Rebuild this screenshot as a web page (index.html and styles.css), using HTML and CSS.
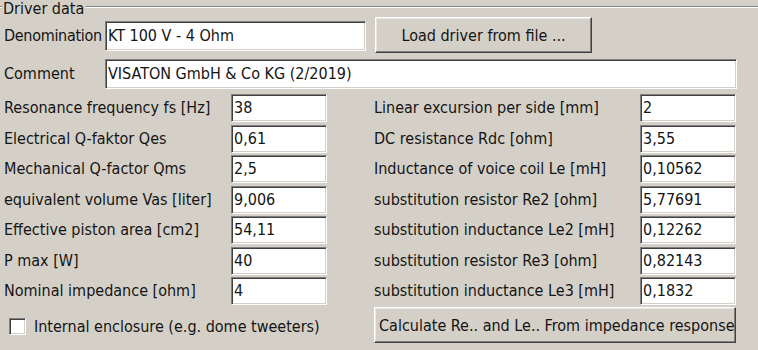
FILE: index.html
```html
<!DOCTYPE html>
<html>
<head>
<meta charset="utf-8">
<link rel="stylesheet" href="styles.css">
</head>
<body>
<div class="panel">
  <div class="legend-row">
    <span class="legend-tick"></span>
    <span class="legend">Driver data</span>
    <span class="legend-line"></span>
  </div>
  <div class="row-denom">
    <span class="lbl lbl-top lbl-denom">Denomination</span>
    <div class="field field-denom">KT 100 V - 4 Ohm</div>
    <div class="btn btn-load">Load driver from file ...</div>
  </div>
  <div class="row-comment">
    <span class="lbl lbl-top">Comment</span>
    <div class="field field-comment">VISATON GmbH &amp; Co KG (2/2019)</div>
  </div>
  <div class="cols">
    <div class="col col-left">
      <span class="lbl">Resonance frequency fs [Hz]</span><div class="field">38</div>
      <span class="lbl">Electrical Q-faktor Qes</span><div class="field">0,61</div>
      <span class="lbl">Mechanical Q-factor Qms</span><div class="field">2,5</div>
      <span class="lbl">equivalent volume Vas [liter]</span><div class="field">9,006</div>
      <span class="lbl">Effective piston area [cm2]</span><div class="field">54,11</div>
      <span class="lbl">P max [W]</span><div class="field">40</div>
      <span class="lbl">Nominal impedance [ohm]</span><div class="field">4</div>
    </div>
    <div class="col col-right">
      <span class="lbl">Linear excursion per side [mm]</span><div class="field">2</div>
      <span class="lbl">DC resistance Rdc [ohm]</span><div class="field">3,55</div>
      <span class="lbl">Inductance of voice coil Le [mH]</span><div class="field">0,10562</div>
      <span class="lbl">substitution resistor Re2 [ohm]</span><div class="field">5,77691</div>
      <span class="lbl">substitution inductance Le2 [mH]</span><div class="field">0,12262</div>
      <span class="lbl">substitution resistor Re3 [ohm]</span><div class="field">0,82143</div>
      <span class="lbl">substitution inductance Le3 [mH]</span><div class="field">0,1832</div>
    </div>
  </div>
  <div class="bottom">
    <label class="check">
      <span class="checkbox"></span>
      <span class="check-text">Internal enclosure (e.g. dome tweeters)</span>
    </label>
    <div class="btn btn-calc">Calculate Re.. and Le.. From impedance response</div>
  </div>
</div>
</body>
</html>
```
FILE: styles.css
```css
html, body {
  margin: 0;
  padding: 0;
  background: #d4d0c8;
}
body {
  width: 758px;
  height: 350px;
  overflow: hidden;
  font-family: "DejaVu Sans Condensed", "DejaVu Sans", sans-serif;
  font-size: 16px;
  color: #141414;
}
.panel {
  padding-left: 4px;
}
.legend-row {
  display: flex;
  align-items: flex-start;
  height: 15px;
  margin-left: -4px;
}
.legend-tick {
  width: 2px;
  height: 0;
  border-top: 1px solid #808080;
  border-bottom: 1px solid #fff;
  margin-top: 6px;
}
.legend {
  padding: 0 2px 0 1px;
  line-height: 17px;
}
.legend-line {
  flex: 1;
  height: 0;
  border-top: 1px solid #808080;
  border-bottom: 1px solid #fff;
  margin-top: 6px;
}
.lbl {
  white-space: nowrap;
  line-height: 28px;
}
.field {
  box-sizing: border-box;
  height: 28px;
  background: #fff;
  border: 1px solid;
  border-color: #808080 #fff #fff #808080;
  box-shadow: inset 1px 1px 0 #404040, inset -1px -1px 0 #d4d0c8;
  padding: 0 2px 0 2px;
  line-height: 26px;
  white-space: nowrap;
  overflow: hidden;
}
.btn {
  box-sizing: border-box;
  height: 36px;
  border: 1px solid;
  border-color: #fff #404040 #404040 #fff;
  box-shadow: inset -1px -1px 0 #808080, inset 1px 1px 0 #e8e6e0;
  display: flex;
  align-items: center;
  justify-content: center;
  white-space: nowrap;
  overflow: hidden;
}
.row-denom {
  display: flex;
  align-items: center;
  margin-top: 2px;
  height: 36px;
}
.lbl-top {
  width: 101px;
}
.lbl-denom {
  margin-top: 2px;
  letter-spacing: -0.3px;
}
.field-denom {
  width: 261px;
  height: 30px;
  line-height: 28px;
  margin-top: 2px;
}
.btn-load {
  width: 217px;
  margin-left: 9px;
}
.row-comment {
  display: flex;
  align-items: center;
  margin-top: 6px;
}
.field-comment {
  width: 632px;
  height: 30px;
  line-height: 28px;
}
.cols {
  display: flex;
  margin-top: 5px;
}
.col {
  display: grid;
  row-gap: 2.5px;
  align-items: center;
}
.col-left {
  grid-template-columns: 227px 96px;
  width: 323px;
}
.col-right {
  grid-template-columns: 266px 96px;
  margin-left: 47px;
}
.bottom {
  display: flex;
  margin-top: 2px;
  align-items: center;
}
.check {
  display: flex;
  align-items: center;
  width: 370px;
  padding-left: 5px;
  box-sizing: border-box;
  margin-top: 3px;
}
.checkbox {
  box-sizing: border-box;
  width: 17px;
  height: 17px;
  background: #fff;
  border: 1px solid;
  border-color: #808080 #fff #fff #808080;
  box-shadow: inset 1px 1px 0 #404040, inset -1px -1px 0 #d4d0c8;
}
.check-text {
  margin-left: 8px;
  white-space: nowrap;
}
.btn-calc {
  width: 362px;
  justify-content: flex-start;
  padding-left: 4px;
}
```
